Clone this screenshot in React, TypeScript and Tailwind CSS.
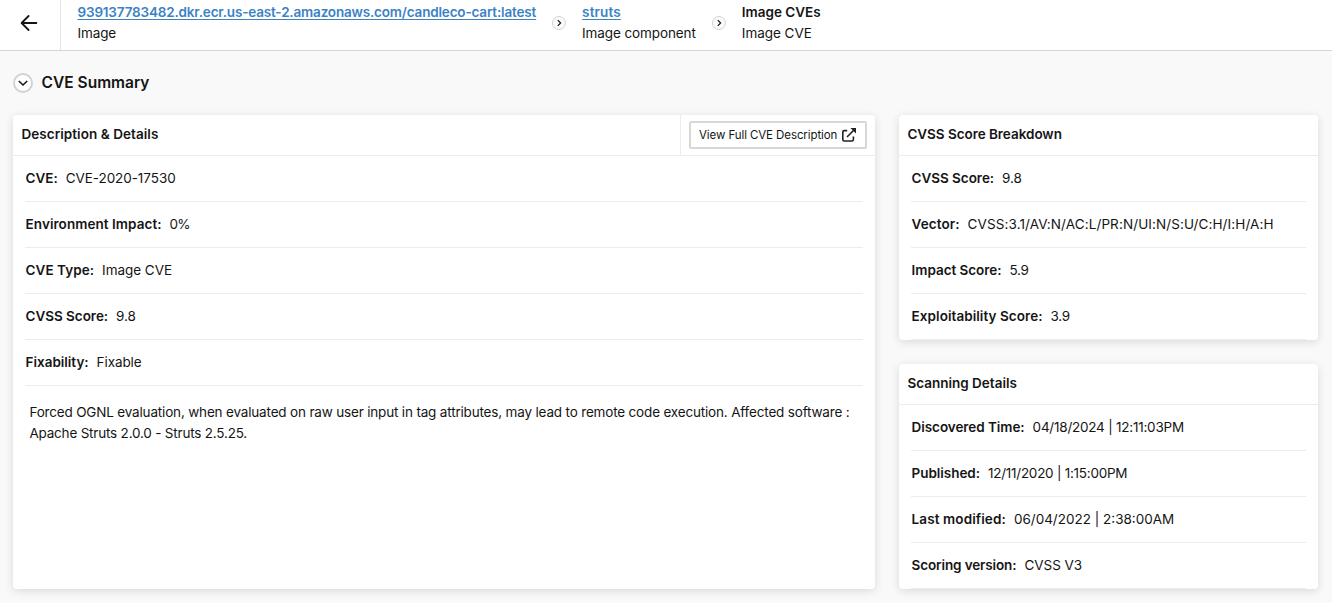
import type { ReactNode } from "react";

type Field = { label: string; labelTracking: string; value: string; valueTracking: string };

const details: Field[] = [
  { label: "CVE:", labelTracking: "tracking-[-0.05px]", value: "CVE-2020-17530", valueTracking: "tracking-[-0.06px]" },
  { label: "Environment Impact:", labelTracking: "tracking-[0.058px]", value: "0%", valueTracking: "tracking-[-0.9px]" },
  { label: "CVE Type:", labelTracking: "tracking-[0.04px]", value: "Image CVE", valueTracking: "tracking-[-0.03px]" },
  { label: "CVSS Score:", labelTracking: "tracking-[-0.04px]", value: "9.8", valueTracking: "tracking-[-0.15px]" },
  { label: "Fixability:", labelTracking: "tracking-[-0.02px]", value: "Fixable", valueTracking: "tracking-[-0.1px]" },
];

const scores: Field[] = [
  { label: "CVSS Score:", labelTracking: "tracking-[-0.04px]", value: "9.8", valueTracking: "tracking-[-0.15px]" },
  { label: "Vector:", labelTracking: "tracking-[0.08px]", value: "CVSS:3.1/AV:N/AC:L/PR:N/UI:N/S:U/C:H/I:H/A:H", valueTracking: "tracking-[0.11px]" },
  { label: "Impact Score:", labelTracking: "tracking-[-0.04px]", value: "5.9", valueTracking: "tracking-[-0.35px]" },
  { label: "Exploitability Score:", labelTracking: "tracking-[0.057px]", value: "3.9", valueTracking: "tracking-[-0.35px]" },
];

const scans: Field[] = [
  { label: "Discovered Time:", labelTracking: "tracking-[-0.06px]", value: "04/18/2024 | 12:11:03PM", valueTracking: "tracking-[-0.23px]" },
  { label: "Published:", labelTracking: "tracking-[-0.05px]", value: "12/11/2020 | 1:15:00PM", valueTracking: "tracking-[-0.25px]" },
  { label: "Last modified:", labelTracking: "tracking-[0.1px]", value: "06/04/2022 | 2:38:00AM", valueTracking: "tracking-normal" },
  { label: "Scoring version:", labelTracking: "tracking-[-0.12px]", value: "CVSS V3", valueTracking: "tracking-[-0.03px]" },
];

function Fields({ items }: { items: Field[] }) {
  return (
    <ul className="px-3">
      {items.map((item) => (
        <li key={item.label} className="flex h-[46px] items-center gap-2 border-b border-[#ececec] pl-[0.6px] whitespace-nowrap">
          <span className={`font-semibold ${item.labelTracking}`}>{item.label}</span>
          <span className={item.valueTracking}>{item.value}</span>
        </li>
      ))}
    </ul>
  );
}

function Card({ title, tracking, action, className, children }: { title: string; tracking: string; action?: ReactNode; className: string; children: ReactNode }) {
  return (
    <section className={`rounded bg-white shadow-[0_2px_10px_rgba(0,0,0,0.13)] ${className}`}>
      <header className="flex h-[41px] items-stretch justify-between border-b border-[#ececec]">
        <h2 className={`flex items-center pb-0.5 pl-[8.4px] font-semibold ${tracking}`}>{title}</h2>
        {action}
      </header>
      {children}
    </section>
  );
}

function Crumb({ title, kind, link, tracking, kindTracking }: { title: string; kind: string; link?: boolean; tracking: string; kindTracking: string }) {
  return (
    <div className="flex flex-col leading-[21px] whitespace-nowrap">
      {link ? (
        <a href="#" className={`font-semibold text-[#3b82c4] underline decoration-1 underline-offset-2 ${tracking}`}>{title}</a>
      ) : (
        <span className={`font-semibold ${tracking}`}>{title}</span>
      )}
      <span className={kindTracking}>{kind}</span>
    </div>
  );
}

function CrumbArrow() {
  return (
    <svg className="size-[14px] shrink-0" viewBox="0 0 14 14" fill="none">
      <circle cx="7" cy="7" r="6.5" fill="#fafafa" stroke="#d2d2d2" />
      <path d="M5.8 4.2 8.6 7 5.8 9.8" stroke="#151515" strokeWidth="1.2" />
    </svg>
  );
}

export default function App() {
  return (
    <div className="flex h-[603px] w-[1332px] flex-col overflow-hidden bg-[#f9f9f9] font-['Inter',sans-serif] text-[13.5px] leading-[21px] text-[#151515]">
      <header className="flex h-[51px] shrink-0 border-b border-[#d5d5d5] bg-white">
        <button aria-label="Back" className="flex w-[61px] items-center justify-center border-r border-[#e5e5e5] pr-[2px] pb-1">
          <svg className="size-[18px]" viewBox="0 0 18 18" fill="none" stroke="#151515" strokeWidth="1.8" strokeLinecap="round" strokeLinejoin="round">
            <path d="M16.4 9H1.8M8.6 2 1.6 9l7 7" />
          </svg>
        </button>
        <nav className="flex h-[46px] items-center pl-[16.5px]">
          <Crumb link title="939137783482.dkr.ecr.us-east-2.amazonaws.com/candleco-cart:latest" kind="Image" tracking="tracking-[-0.174px]" kindTracking="tracking-[-0.13px]" />
          <div className="flex w-[46px] justify-center"><CrumbArrow /></div>
          <Crumb link title="struts" kind="Image component" tracking="self-start tracking-[0.15px]" kindTracking="tracking-[-0.1px]" />
          <div className="flex w-[46px] justify-center"><CrumbArrow /></div>
          <Crumb title="Image CVEs" kind="Image CVE" tracking="tracking-normal" kindTracking="tracking-[-0.03px]" />
        </nav>
      </header>
      <main className="flex grow flex-col px-[13px]">
        <div className="flex h-16 items-center gap-[8.6px]">
          <svg className="size-5" viewBox="0 0 20 20" fill="none">
            <circle cx="10" cy="10" r="9" fill="#fff" stroke="#d2d2d2" strokeWidth="2" />
            <path d="m5.8 8 4.2 4 4.2-4" stroke="#151515" strokeWidth="1.6" />
          </svg>
          <h1 className="pb-px text-[15.5px] font-semibold">CVE Summary</h1>
        </div>
        <div className="flex gap-6">
          <Card
            className="h-[474px] w-[862px]"
            title="Description & Details"
            tracking="tracking-[0.057px]"
            action={
              <div className="flex items-center border-l border-[#ececec] px-2">
                <button className="flex h-7 w-[178px] items-center justify-between rounded-[2px] border-2 border-[#d8d8d8] pr-2 pl-2 text-[11.5px] tracking-[-0.09px] whitespace-nowrap">
                  View Full CVE Description
                  <svg className="size-4" viewBox="0 0 16 16" fill="none" stroke="#222" strokeWidth="1.6">
                    <path d="M6.2 3.6H3.3Q1.8 3.6 1.8 5.1v7.4Q1.8 14 3.3 14h7.6q1.5 0 1.5-1.5V9.4" />
                    <path d="M6 10 12.5 3.5" />
                    <path d="M9.4 1H15v5.6Z" fill="#222" stroke="none" />
                  </svg>
                </button>
              </div>
            }
          >
            <Fields items={details} />
            <p className="px-4 pt-4 pl-[16.4px] whitespace-nowrap">
              <span className="tracking-[-0.174px]">Forced OGNL evaluation, when evaluated on raw user input in tag attributes, may lead to remote code execution. Affected software :</span>
              <br />
              <span className="tracking-[-0.2px]">Apache Struts 2.0.0 - Struts 2.5.25.</span>
            </p>
          </Card>
          <div className="flex flex-col gap-6">
            <Card className="h-[225px] w-[419px]" title="CVSS Score Breakdown" tracking="tracking-[-0.04px]">
              <Fields items={scores} />
            </Card>
            <Card className="h-[225px] w-[419px]" title="Scanning Details" tracking="tracking-normal">
              <Fields items={scans} />
            </Card>
          </div>
        </div>
      </main>
    </div>
  );
}
